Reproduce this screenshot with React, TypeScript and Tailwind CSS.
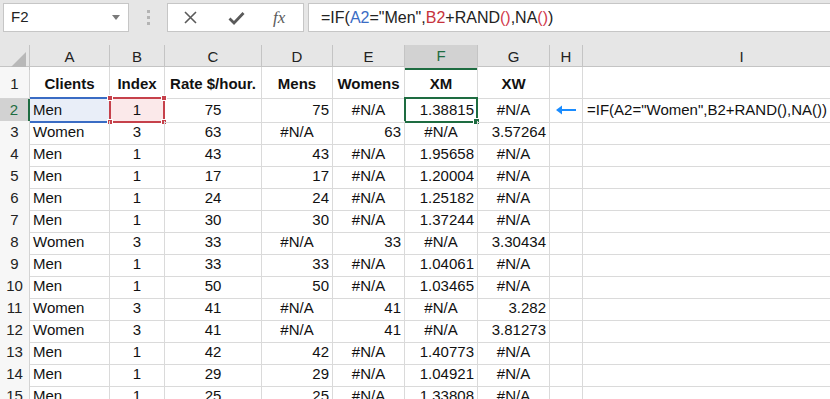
import React from 'react';

const FONT = { fontFamily: '"Liberation Sans", Arial, sans-serif' };

const columns = ['A', 'B', 'C', 'D', 'E', 'F', 'G', 'H', 'I'];

const rows: string[][] = [
  ['Men', '1', '75', '75', '#N/A', '1.38815', '#N/A'],
  ['Women', '3', '63', '#N/A', '63', '#N/A', '3.57264'],
  ['Men', '1', '43', '43', '#N/A', '1.95658', '#N/A'],
  ['Men', '1', '17', '17', '#N/A', '1.20004', '#N/A'],
  ['Men', '1', '24', '24', '#N/A', '1.25182', '#N/A'],
  ['Men', '1', '30', '30', '#N/A', '1.37244', '#N/A'],
  ['Women', '3', '33', '#N/A', '33', '#N/A', '3.30434'],
  ['Men', '1', '33', '33', '#N/A', '1.04061', '#N/A'],
  ['Men', '1', '50', '50', '#N/A', '1.03465', '#N/A'],
  ['Women', '3', '41', '#N/A', '41', '#N/A', '3.282'],
  ['Women', '3', '41', '#N/A', '41', '#N/A', '3.81273'],
  ['Men', '1', '42', '42', '#N/A', '1.40773', '#N/A'],
  ['Men', '1', '29', '29', '#N/A', '1.04921', '#N/A'],
  ['Men', '1', '25', '25', '#N/A', '1.33808', '#N/A'],
];

const headers = ['Clients', 'Index', 'Rate $/hour.', 'Mens', 'Womens', 'XM', 'XW'];

const GRID = 'grid grid-cols-[30px_80px_55px_97px_71px_72px_73px_72px_33px_318px]';

function align(col: number, value: string) {
  if (col === 0) return 'justify-start pl-[3px]';
  if (col === 1 || col === 2) return 'justify-center';
  if (value === '#N/A') return 'justify-center';
  return 'justify-end pr-[3px]';
}

function Handle({ className }: { className: string }) {
  return <span className={`absolute w-[6px] h-[6px] border border-white ${className}`} />;
}

function FormulaBar() {
  return (
    <div className="h-[45px] bg-[#e6e6e6] flex items-start pt-[3px] pl-[3px] gap-0">
      <div className="w-[126px] h-[29px] bg-white border border-[#c6c6c6] flex items-center justify-between pl-[7px] pr-[8px] text-[15px] text-[#222]">
        <span>F2</span>
        <svg width="8" height="5" viewBox="0 0 8 5"><path d="M0 0h8L4 5z" fill="#7a7a7a" /></svg>
      </div>
      <div className="w-[38px] h-[29px] flex flex-col items-center justify-center gap-[3px]">
        <span className="w-[3px] h-[3px] bg-[#b4b4b4]" />
        <span className="w-[3px] h-[3px] bg-[#b4b4b4]" />
        <span className="w-[3px] h-[3px] bg-[#b4b4b4]" />
      </div>
      <div className="w-[137px] h-[29px] bg-white border border-[#c6c6c6] flex items-center">
        <svg className="ml-[15px]" width="15" height="15" viewBox="0 0 15 15">
          <path d="M2 2l11 11M13 2L2 13" stroke="#5a5a5a" strokeWidth="1.6" />
        </svg>
        <svg className="ml-[30px]" width="17" height="14" viewBox="0 0 17 14">
          <path d="M1.5 7.5l4.5 4.5L15.5 2" stroke="#5a5a5a" strokeWidth="2.8" fill="none" />
        </svg>
        <span className="ml-[28px] text-[#5a5a5a] text-[17px] italic" style={{ fontFamily: '"Liberation Serif", serif' }}>
          fx
        </span>
      </div>
      <div className="ml-[4px] flex-1 h-[29px] bg-white border border-[#c6c6c6] border-r-0 flex items-center pl-[12px] text-[16px] text-[#222]">
        <span>=IF(</span>
        <span className="text-[#3a6cc4]">A2</span>
        <span>="Men",</span>
        <span className="text-[#c6323c]">B2</span>
        <span>+RAND</span>
        <span className="text-[#d2394b]">()</span>
        <span>,NA</span>
        <span className="text-[#d2394b]">()</span>
        <span>)</span>
      </div>
    </div>
  );
}

function ColumnHeaders() {
  return (
    <div className={`${GRID} h-[22px] bg-[#e6e6e6] border-b border-[#c4c4c4]`}>
      <div className="relative border-r border-[#c4c4c4]">
        <svg className="absolute right-[3px] bottom-[3px]" width="15" height="15" viewBox="0 0 15 15">
          <path d="M15 0v15H0z" fill="#b8b8b8" />
        </svg>
      </div>
      {columns.map((c) => (
        <div
          key={c}
          className={`flex items-center justify-center text-[15px] border-r border-[#c4c4c4] ${
            c === 'F' ? 'bg-[#d2d2d2] text-[#1e6c41] border-b-2 border-b-[#1e6c41]' : 'text-[#222]'
          }`}
        >
          {c}
        </div>
      ))}
    </div>
  );
}

function HeaderRow() {
  return (
    <div className={`${GRID} h-[32px]`}>
      <div className="flex items-end justify-center pb-[3px] bg-[#f7f7f7] border-r border-b border-[#d4d4d4] text-[15px] text-[#222]">
        1
      </div>
      {headers.map((h, i) => (
        <div
          key={h}
          className="flex items-end justify-center pb-[3px] border-r border-b border-[#dadada] text-[15px] font-bold text-[#111]"
        >
          {h}
        </div>
      ))}
      <div className="border-r border-b border-[#dadada]" />
      <div className="border-r border-b border-[#dadada]" />
    </div>
  );
}

function DataRow({ n, values }: { n: number; values: string[] }) {
  const selected = n === 2;
  return (
    <div className={`${GRID} h-[22px]`}>
      <div
        className={`flex items-center justify-center border-b text-[15px] ${
          selected
            ? 'bg-[#d2d2d2] text-[#1e6c41] border-r-2 border-r-[#1e6c41] border-b-[#c4c4c4]'
            : 'bg-[#f7f7f7] text-[#222] border-r border-[#d4d4d4]'
        }`}
      >
        {n}
      </div>
      {values.map((v, i) => (
        <div
          key={i}
          className={`relative flex items-center ${align(i, v)} border-r border-b border-[#dadada] text-[15px] text-[#111] ${
            selected && i === 0 ? 'bg-[#e9eef8]' : ''
          } ${selected && i === 1 ? 'bg-[#fbe9ea]' : ''}`}
        >
          {selected && i === 0 && (
            <span className="absolute -top-[2px] -bottom-[1px] left-0 right-0 border-y-2 border-[#3a6cc4]" />
          )}
          {selected && i === 1 && (
            <span className="absolute -top-[2px] -bottom-[1px] -left-[1px] right-[-1px] border-2 border-[#c6414b]">
              <Handle className="bg-[#c6414b] -top-[4px] -left-[4px]" />
              <Handle className="bg-[#c6414b] -top-[4px] -right-[4px]" />
              <Handle className="bg-[#c6414b] -bottom-[4px] -left-[4px]" />
              <Handle className="bg-[#c6414b] -bottom-[4px] -right-[4px]" />
            </span>
          )}
          {selected && i === 5 && (
            <span className="absolute -top-[2px] -bottom-[1px] -left-[1px] right-[-1px] border-2 border-[#1e6c41]">
              <Handle className="bg-[#1e6c41] -bottom-[4px] -right-[4px] w-[7px] h-[7px]" />
            </span>
          )}
          <span className="relative">{v}</span>
        </div>
      ))}
      <div className="flex items-center justify-center border-r border-b border-[#dadada]">
        {selected && (
          <svg width="20" height="10" viewBox="0 0 20 10">
            <path d="M20 5H3" stroke="#1a8cff" strokeWidth="2" />
            <path d="M0 5l6-4.5v9z" fill="#1a8cff" />
          </svg>
        )}
      </div>
      <div className="flex items-center pl-[4px] border-r border-b border-[#dadada] text-[15px] text-[#111] whitespace-nowrap">
        {selected ? '=IF(A2="Women",B2+RAND(),NA())' : ''}
      </div>
    </div>
  );
}

export default function App() {
  return (
    <div className="w-[830px] h-[399px] overflow-hidden bg-white" style={FONT}>
      <FormulaBar />
      <ColumnHeaders />
      <HeaderRow />
      {rows.map((r, i) => (
        <DataRow key={i} n={i + 2} values={r} />
      ))}
    </div>
  );
}
